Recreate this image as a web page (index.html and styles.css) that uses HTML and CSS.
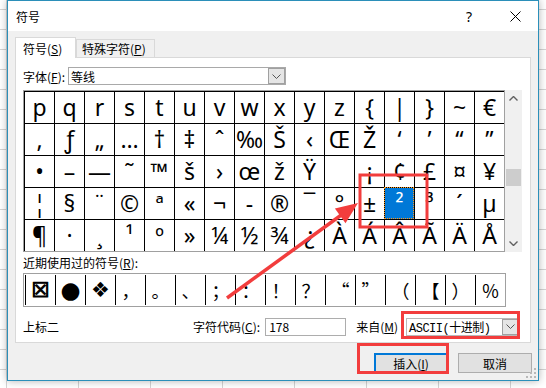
FILE: index.html
```html
<!DOCTYPE html>
<html lang="zh-CN">
<head>
  <meta charset="UTF-8" />
  <title>符号</title>
  <link rel="stylesheet" href="styles.css">
</head>
<body>
  <div class="dialog">
    <div class="titlebar">
      <span class="title">符号</span>
      <span class="title-btn help">?</span>
      <span class="title-btn close">
        <svg width="11" height="11" viewBox="0 0 11 11"><path d="M0.5 0.5 L10.5 10.5 M10.5 0.5 L0.5 10.5" stroke="#000" stroke-width="1" fill="none"/></svg>
      </span>
    </div>

    <div class="content">
      <div class="tabs">
        <div class="tab active">符号(<u>S</u>)</div>
        <div class="tab">特殊字符(<u>P</u>)</div>
      </div>

      <div class="panel">
        <div class="font-row">
          <span class="label">字体(<u>F</u>):</span>
          <div class="select font-select">
            <span class="select-text">等线</span>
            <span class="drop">
              <svg width="9" height="5" viewBox="0 0 9 5"><path d="M0.5 0.5 L4.5 4.5 L8.5 0.5" stroke="#555" fill="none"/></svg>
            </span>
          </div>
        </div>

        <div class="chart">
          <div class="cells">
            <span class="cell">p</span><span class="cell">q</span><span class="cell">r</span><span class="cell">s</span>
            <span class="cell">t</span><span class="cell">u</span><span class="cell">v</span><span class="cell">w</span>
            <span class="cell">x</span><span class="cell">y</span><span class="cell">z</span><span class="cell">{</span>
            <span class="cell">|</span><span class="cell">}</span><span class="cell">~</span><span class="cell">€</span>

            <span class="cell">‚</span><span class="cell">ƒ</span><span class="cell">„</span><span class="cell">…</span>
            <span class="cell">†</span><span class="cell">‡</span><span class="cell">ˆ</span><span class="cell">‰</span>
            <span class="cell">Š</span><span class="cell">‹</span><span class="cell">Œ</span><span class="cell">Ž</span>
            <span class="cell">‘</span><span class="cell">’</span><span class="cell">“</span><span class="cell">”</span>

            <span class="cell">•</span><span class="cell">–</span><span class="cell">—</span><span class="cell">˜</span>
            <span class="cell">™</span><span class="cell">š</span><span class="cell">›</span><span class="cell">œ</span>
            <span class="cell">ž</span><span class="cell">Ÿ</span><span class="cell">&nbsp;</span><span class="cell">¡</span>
            <span class="cell">¢</span><span class="cell">£</span><span class="cell">¤</span><span class="cell">¥</span>

            <span class="cell">¦</span><span class="cell">§</span><span class="cell">¨</span><span class="cell">©</span>
            <span class="cell">ª</span><span class="cell">«</span><span class="cell">¬</span><span class="cell">-</span>
            <span class="cell">®</span><span class="cell">¯</span><span class="cell">°</span><span class="cell">±</span>
            <span class="cell selected">²</span><span class="cell">³</span><span class="cell">´</span><span class="cell">µ</span>

            <span class="cell">¶</span><span class="cell">·</span><span class="cell">¸</span><span class="cell">¹</span>
            <span class="cell">º</span><span class="cell">»</span><span class="cell">¼</span><span class="cell">½</span>
            <span class="cell">¾</span><span class="cell">¿</span><span class="cell">À</span><span class="cell">Á</span>
            <span class="cell">Â</span><span class="cell">Ã</span><span class="cell">Ä</span><span class="cell">Å</span>
          </div>

          <div class="scrollbar">
            <span class="sb-btn">
              <svg width="9" height="5" viewBox="0 0 9 5"><path d="M0.5 4.5 L4.5 0.5 L8.5 4.5" stroke="#606060" stroke-width="1.4" fill="none"/></svg>
            </span>
            <span class="thumb"></span>
            <span class="sb-btn bottom">
              <svg width="9" height="5" viewBox="0 0 9 5"><path d="M0.5 0.5 L4.5 4.5 L8.5 0.5" stroke="#606060" stroke-width="1.4" fill="none"/></svg>
            </span>
          </div>
        </div>

        <div class="recent-label">近期使用过的符号(<u>R</u>):</div>
        <div class="recent">
          <span class="rcell sym-box">☒</span>
          <span class="rcell sym-dot">●</span>
          <span class="rcell sym-diamond">❖</span>
          <span class="rcell">，</span>
          <span class="rcell">。</span>
          <span class="rcell">、</span>
          <span class="rcell">；</span>
          <span class="rcell">：</span>
          <span class="rcell">！</span>
          <span class="rcell">？</span>
          <span class="rcell">“</span>
          <span class="rcell">”</span>
          <span class="rcell">（</span>
          <span class="rcell">【</span>
          <span class="rcell">）</span>
          <span class="rcell">％</span>
        </div>

        <div class="info-row">
          <span class="char-name">上标二</span>
          <span class="label">字符代码(<u>C</u>):</span>
          <span class="code-input">178</span>
          <span class="label from-label">来自(<u>M</u>)</span>
          <div class="select from-select">
            <span class="select-text mono">ASCII(十进制)</span>
            <span class="drop">
              <svg width="9" height="5" viewBox="0 0 9 5"><path d="M0.5 0.5 L4.5 4.5 L8.5 0.5" stroke="#555" fill="none"/></svg>
            </span>
          </div>
        </div>
      </div>

      <div class="buttons">
        <button class="btn primary">插入(<u>I</u>)</button>
        <button class="btn">取消</button>
      </div>
    </div>

    <svg class="grip" width="10" height="10" viewBox="0 0 10 10">
      <rect x="8" y="0" width="2" height="2" fill="#b8b8b8"/>
      <rect x="4" y="4" width="2" height="2" fill="#b8b8b8"/>
      <rect x="8" y="4" width="2" height="2" fill="#b8b8b8"/>
      <rect x="0" y="8" width="2" height="2" fill="#b8b8b8"/>
      <rect x="4" y="8" width="2" height="2" fill="#b8b8b8"/>
      <rect x="8" y="8" width="2" height="2" fill="#b8b8b8"/>
    </svg>
  </div>

  <!-- red markup drawn over the screenshot -->
  <svg class="marks" width="546" height="388" viewBox="0 0 546 388">
    <g fill="none" stroke="#f23d3d" stroke-width="3">
      <rect x="360" y="175" width="67" height="52"/>
      <rect x="402.5" y="312.5" width="116" height="25"/>
      <rect x="358.5" y="344.5" width="89" height="28"/>
      <line x1="227" y1="298" x2="344" y2="213" stroke-width="3.5"/>
    </g>
    <polygon points="358,203 345.5,223.2 334.9,208.6" fill="#f23d3d"/>
  </svg>
</body>
</html>
```

FILE: styles.css
```css
body {
  margin: 0;
  width: 546px;
  height: 388px;
  overflow: hidden;
  position: relative;
  font-family: "Noto Sans CJK SC", "Noto Sans", sans-serif;
  font-size: 12px;
  color: #000;
  background-color: #fff;
  background-image:
    linear-gradient(#d4d4d4 1px, transparent 1px),
    linear-gradient(90deg, #d4d4d4 1px, transparent 1px);
  background-size: 72px 20px;
  background-position: 6px 9px;
}

u {
  text-decoration: underline;
  text-underline-offset: 1px;
}

.dialog {
  position: relative;
  margin-left: 7px;
  width: 532px;
  height: 381px;
  box-sizing: border-box;
  border: 1px solid #2b8fb9;
  background: #f0f0f0;
  box-shadow: 0 0 8px rgba(0, 0, 0, 0.3);
}

/* title bar */
.titlebar {
  display: flex;
  align-items: center;
  height: 30px;
  padding-left: 8px;
  background: #fff;
}

.title {
  flex: 1;
}

.title-btn {
  display: flex;
  align-items: center;
  justify-content: center;
  width: 46px;
  height: 30px;
}

.help {
  font-family: "Noto Sans", sans-serif;
  font-size: 14px;
}

.content {
  padding: 6px 7px 0;
}

/* tabs */
.tabs {
  position: relative;
  z-index: 1;
  display: flex;
  align-items: flex-end;
  height: 21px;
  margin-bottom: -1px;
}

.tab {
  display: flex;
  align-items: center;
  box-sizing: border-box;
  height: 18px;
  width: 79px;
  margin-bottom: 1px;
  padding-left: 5px;
  border: 1px solid #d9d9d9;
  border-bottom: none;
}

.tab.active {
  width: 61px;
  height: 21px;
  margin-bottom: 0;
  padding-left: 7px;
  background: #fff;
}

/* main panel */
.panel {
  box-sizing: border-box;
  height: 286px;
  padding: 9px 7px 0;
  border: 1px solid #d9d9d9;
  background: #fff;
}

.font-row {
  display: flex;
  align-items: center;
  height: 18px;
}

.font-row .label {
  margin-right: 3px;
}

.select {
  display: flex;
  align-items: center;
  box-sizing: border-box;
  height: 18px;
  border: 1px solid #a9a9a9;
  background: #fff;
}

.select-text {
  flex: 1;
  padding-left: 2px;
}

.font-select {
  width: 218px;
}

.drop {
  display: flex;
  align-items: center;
  justify-content: center;
  box-sizing: border-box;
  width: 17px;
  height: 100%;
  border: 1px solid #a0a0a0;
  background: #e5e5e5;
}

/* character chart */
.chart {
  display: flex;
  margin-top: 5px;
}

.cells {
  display: grid;
  grid-template-columns: repeat(16, 30px);
  grid-auto-rows: 32px;
  border: 1px solid #a0a0a0;
}

.cell {
  box-sizing: border-box;
  border-left: 1px solid #000;
  border-top: 1px solid #000;
  font-family: "Noto Sans", "DejaVu Sans", sans-serif;
  font-size: 23px;
  line-height: 31px;
  text-align: center;
  overflow: hidden;
}

.cell.selected {
  background: #0078d7;
  color: #fff;
  outline: 1px dotted #ff9a1a;
  outline-offset: -1px;
}

.scrollbar {
  display: flex;
  flex-direction: column;
  width: 17px;
  background: #f0f0f0;
}

.sb-btn {
  display: flex;
  align-items: center;
  justify-content: center;
  height: 17px;
}

.sb-btn.bottom {
  margin-top: auto;
}

.thumb {
  height: 17px;
  margin: 62px 1px 0;
  background: #cdcdcd;
}

/* recently used */
.recent-label {
  display: flex;
  align-items: center;
  height: 21px;
}

.recent {
  display: flex;
  box-sizing: border-box;
  width: 483px;
  height: 34px;
  padding: 1px 0 0 1px;
  border: 1px solid #a0a0a0;
}

.rcell {
  display: flex;
  align-items: center;
  justify-content: center;
  box-sizing: border-box;
  width: 30px;
  height: 30px;
  border-left: 1px solid #000;
  font-size: 18px;
}

.sym-box {
  font-family: "DejaVu Sans", sans-serif;
  font-size: 20px;
  font-weight: bold;
  -webkit-text-stroke: 1px #000;
}

.sym-dot {
  font-family: "DejaVu Sans", sans-serif;
  font-size: 23px;
}

.sym-diamond {
  font-family: "DejaVu Sans", sans-serif;
  font-size: 21px;
}

/* bottom info row */
.info-row {
  display: flex;
  align-items: center;
  height: 19px;
  margin-top: 10px;
}

.char-name {
  width: 170px;
}

.code-input {
  box-sizing: border-box;
  width: 81px;
  height: 18px;
  margin-left: 5px;
  padding-left: 3px;
  border: 1px solid #adadad;
  line-height: 16px;
}

.from-label {
  margin-left: 10px;
}

.from-select {
  width: 114px;
  margin-left: 8px;
  border-color: #b9b9b9;
}

.mono {
  font-family: "Liberation Mono", "Noto Sans CJK SC", monospace;
  letter-spacing: -0.5px;
}

/* buttons */
.buttons {
  display: flex;
  justify-content: flex-end;
  gap: 10px;
  margin-top: 10px;
  margin-right: -1px;
}

.btn {
  box-sizing: border-box;
  width: 74px;
  height: 20px;
  padding: 0;
  border: 1px solid #adadad;
  background: #e1e1e1;
  font: inherit;
  color: #000;
}

.btn.primary {
  border: 2px solid #0078d7;
}

.grip {
  position: absolute;
  right: 2px;
  bottom: 2px;
}

.marks {
  position: absolute;
  top: 0;
  left: 0;
  pointer-events: none;
}
```
